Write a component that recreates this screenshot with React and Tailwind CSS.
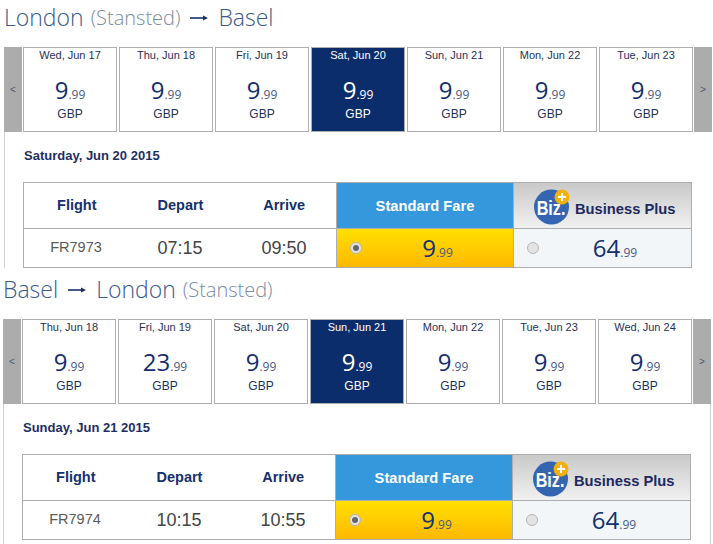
function Arrow() {
  return (
    <svg width="18" height="8" viewBox="0 0 18 8" className="mx-[10px]">
      <path d="M0 4h14" stroke="#1a2f66" strokeWidth="1.6" />
      <path d="M13 1.5 L18 4 L13 6.5 Z" fill="#1a2f66" />
    </svg>
  );
}

function Price({ whole, light }) {
  return (
    <div className={`font-['Open_Sans',sans-serif] leading-none ${light ? "text-white" : "text-[#14306e]"}`}>
      <span className="text-[24px] font-normal">{whole}</span>
      <span className={`text-[12px] ${light ? "text-white" : "text-[#4a5a80]"}`}>.99</span>
    </div>
  );
}

function DayCard({ day, whole, active }) {
  return (
    <div
      className={`w-[94px] h-[85px] border border-[#aeaeae] flex flex-col items-center leading-none ${
        active ? "bg-[#0c2d6b] text-white" : "bg-white text-[#1f3159]"
      }`}
    >
      <div className="h-[14px] text-[11px] leading-[14px]">{day}</div>
      <div className="mt-[16px] h-[24px]">
        <Price whole={whole} light={active} />
      </div>
      <div className="mt-[6px] text-[12px]">GBP</div>
    </div>
  );
}

function Radio({ checked }) {
  return (
    <div className="ml-[13px] w-[12px] h-[12px] rounded-full border border-[#b4b4b4] bg-[#e4e4e4] flex items-center justify-center shrink-0">
      {checked && <div className="w-[6px] h-[6px] rounded-full bg-[#666]" />}
    </div>
  );
}

function BizLogo() {
  return (
    <svg width="36" height="42" viewBox="0 0 36 42" className="shrink-0">
      <circle cx="17.5" cy="24" r="17.5" fill="#3565b0" />
      <text
        transform="translate(17 32) scale(0.77 1)"
        textAnchor="middle"
        fill="#fff"
        fontFamily="Liberation Sans, sans-serif"
        fontWeight="700"
        fontSize="21"
      >
        Biz.
      </text>
      <circle cx="28" cy="14" r="7.5" fill="#f0b208" />
      <path d="M28 10v8M24 14h8" stroke="#fff" strokeWidth="2" />
    </svg>
  );
}

function Section({ from, via, days, dateLabel, flight, depart, arrive, sectionClass, bodyClass }) {
  return (
    <section className={`h-[272px] ${sectionClass}`}>
      <h1 className="h-[47px] pb-[12px] flex items-center font-['Open_Sans',sans-serif] font-light text-[#3a5a8c] leading-none">
        {from.map((part, i) => (
          <span key={i} className="flex items-center">
            {i === 1 && <Arrow />}
            <span className="text-[23px]">{part}</span>
            {via[i] && <span className="text-[20px] text-[#7a8ba5] ml-[7px]">{via[i]}</span>}
          </span>
        ))}
      </h1>

      <div className="flex w-[709px]">
        <div className="w-[18px] h-[85px] bg-[#acacac] flex items-center justify-center text-[10px] text-[#4c5a70] font-['Liberation_Sans',sans-serif]">
          &lt;
        </div>
        <div className="flex gap-[2px] ml-[1px] font-['Liberation_Sans',sans-serif]">
          {days.map((d) => (
            <DayCard key={d.day} {...d} />
          ))}
        </div>
        <div className="w-[18px] h-[85px] ml-[1px] bg-[#acacac] flex items-center justify-center text-[10px] text-[#4c5a70] font-['Liberation_Sans',sans-serif]">
          &gt;
        </div>
      </div>

      <div className={`border-l border-[#d0d0d0] pl-[18px] font-['Liberation_Sans',sans-serif] ${bodyClass}`}>
        <div className="h-[50px] pt-[17px] pl-[1px] text-[13px] font-bold text-[#1c2f63] leading-[14px]">{dateLabel}</div>
        <div className="w-[669px] border border-[#aeaeae] grid grid-cols-[312px_177px_178px] grid-rows-[46px_38px]">
          <div className="grid grid-cols-3 items-center text-center border-b border-[#aeaeae] pt-[1px] pl-[1px] text-[14.5px] font-bold text-[#14306e]">
            <div>Flight</div>
            <div>Depart</div>
            <div>Arrive</div>
          </div>
          <div className="bg-[#3597dc] border-l border-b border-[#aeaeae] flex items-center justify-center pt-[1px] text-[14.7px] font-bold text-white">
            Standard Fare
          </div>
          <div className="bg-gradient-to-b from-[#c9c9c9] to-[#f1f1f1] border-l border-b border-[#aeaeae] flex items-end pl-[20px] pb-[3px]">
            <BizLogo />
            <span className="ml-[5px] mb-[5px] text-[14.7px] font-bold text-[#20295f]">Business Plus</span>
          </div>
          <div className="grid grid-cols-3 items-center text-center text-[#444]">
            <div className="text-[14.5px] text-[#5a5a5a]">{flight}</div>
            <div className="text-[18px]">{depart}</div>
            <div className="text-[18px]">{arrive}</div>
          </div>
          <div className="bg-gradient-to-b from-[#ffe000] to-[#ffb800] border-l border-[#aeaeae] flex items-center">
            <Radio checked />
            <div className="flex-1 flex justify-center">
              <Price whole="9" />
            </div>
          </div>
          <div className="bg-[#f3f6f8] border-l border-[#aeaeae] flex items-center">
            <Radio />
            <div className="flex-1 flex justify-center">
              <Price whole="64" />
            </div>
          </div>
        </div>
      </div>
    </section>
  );
}

const outbound = [
  { day: "Wed, Jun 17", whole: "9" },
  { day: "Thu, Jun 18", whole: "9" },
  { day: "Fri, Jun 19", whole: "9" },
  { day: "Sat, Jun 20", whole: "9", active: true },
  { day: "Sun, Jun 21", whole: "9" },
  { day: "Mon, Jun 22", whole: "9" },
  { day: "Tue, Jun 23", whole: "9" },
];

const inbound = [
  { day: "Thu, Jun 18", whole: "9" },
  { day: "Fri, Jun 19", whole: "23" },
  { day: "Sat, Jun 20", whole: "9" },
  { day: "Sun, Jun 21", whole: "9", active: true },
  { day: "Mon, Jun 22", whole: "9" },
  { day: "Tue, Jun 23", whole: "9" },
  { day: "Wed, Jun 24", whole: "9" },
];

export default function App() {
  return (
    <div className="w-[713px] h-[544px] overflow-hidden bg-white">
      <Section
        from={["London", "Basel"]}
        via={["(Stansted)", ""]}
        days={outbound}
        dateLabel="Saturday, Jun 20 2015"
        flight="FR7973"
        depart="07:15"
        arrive="09:50"
        sectionClass="ml-[4px]"
        bodyClass=""
      />
      <Section
        from={["Basel", "London"]}
        via={["", "(Stansted)"]}
        days={inbound}
        dateLabel="Sunday, Jun 21 2015"
        flight="FR7974"
        depart="10:15"
        arrive="10:55"
        sectionClass="ml-[3px]"
        bodyClass="h-[140px] w-[708px] border-r"
      />
    </div>
  );
}
